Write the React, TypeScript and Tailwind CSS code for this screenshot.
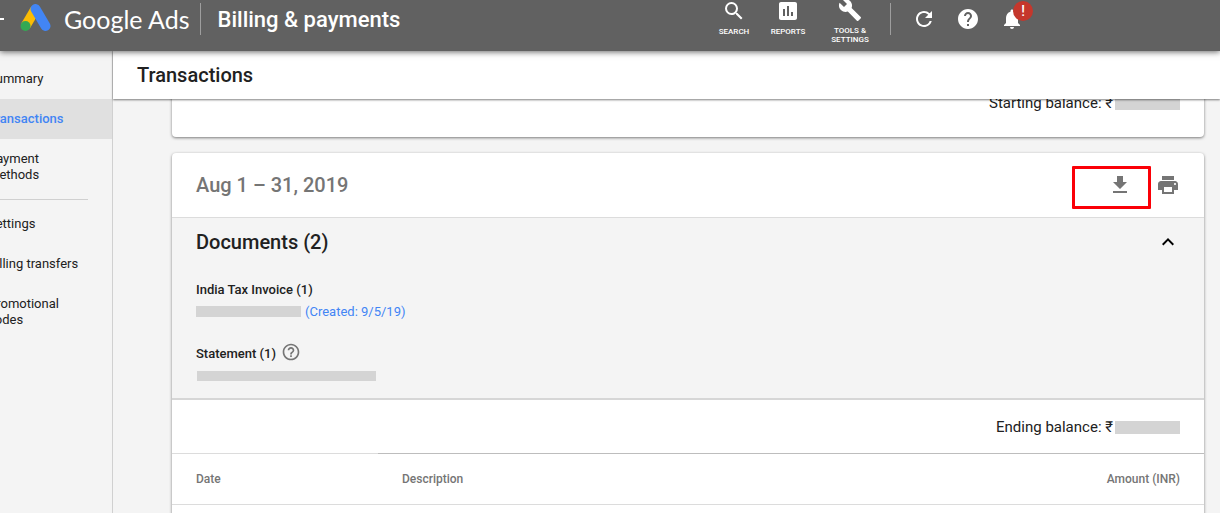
import type { ReactNode } from "react";
import {
  MdAssessment,
  MdBuild,
  MdExpandLess,
  MdFileDownload,
  MdHelp,
  MdHelpOutline,
  MdNotifications,
  MdPrint,
  MdRefresh,
  MdSearch,
} from "react-icons/md";

function AdsLogo() {
  return (
    <svg width="32" height="30" viewBox="0 0 32 30" className="shrink-0" aria-hidden="true">
      <path d="M15.5 5 5.5 22" stroke="#fbbc04" strokeWidth="10" />
      <circle cx="5.5" cy="22" r="5" fill="#34a853" />
      <path d="M15.5 5 25.5 22" stroke="#4285f4" strokeWidth="10" strokeLinecap="round" />
    </svg>
  );
}

interface ToolProps {
  icon: ReactNode;
  label: string;
  className: string;
}

function HeaderTool({ icon, label, className }: ToolProps) {
  return (
    <button
      type="button"
      className={
        "flex w-[54px] flex-col items-center text-[8px] font-medium uppercase leading-[9px] text-white " +
        className
      }
    >
      {icon}
      <span>{label}</span>
    </button>
  );
}

function Header() {
  return (
    <header className="relative z-20 flex h-[51px] shrink-0 items-start bg-[#616161] text-white shadow-[0_1px_6px_rgba(0,0,0,0.6)]">
      <div className="flex h-[38px] items-center">
        <span className="h-0.5 w-1 bg-white" />
        <a href="#home" className="ml-4 flex items-center gap-3">
          <AdsLogo />
          <span className="font-[Lato] text-[25px] leading-8">Google Ads</span>
        </a>
      </div>
      <div className="ml-2.5 flex pt-[3px]">
        <span className="h-8 w-px bg-[#9e9e9e]" />
        <h1 className="ml-[17px] pt-px text-[22px] font-medium leading-8">Billing &amp; payments</h1>
      </div>

      <div className="ml-auto flex">
        <HeaderTool className="-mt-px gap-1" icon={<MdSearch size={24} />} label="Search" />
        <HeaderTool className="-mt-px gap-1" icon={<MdAssessment size={24} />} label="Reports" />
        <HeaderTool
          className="-mt-0.5 ml-2 gap-1"
          icon={<MdBuild size={24} />}
          label="Tools & Settings"
        />
      </div>
      <div className="ml-[13px] mr-[196px] flex h-[38px] items-center">
        <span className="h-8 w-px bg-[#9e9e9e]" />
        <button type="button" aria-label="Refresh" className="ml-[21px]">
          <MdRefresh size={24} />
        </button>
        <button type="button" aria-label="Help" className="ml-5">
          <MdHelp size={24} />
        </button>
        <button type="button" aria-label="Notifications" className="relative ml-5">
          <MdNotifications size={24} />
          <span className="absolute -top-1.5 left-[13px] flex size-5 items-center justify-center rounded-full bg-[#c5372c] text-sm font-medium leading-5">
            !
          </span>
        </button>
      </div>
    </header>
  );
}

function NavItem({ label, active = false }: { label: string; active?: boolean }) {
  return (
    <a
      href="#nav"
      className={
        "block py-3 pr-6 text-[13px] leading-4 " +
        (active ? "bg-[#e0e0e0] font-medium text-[#4285f4]" : "text-[#212121]")
      }
    >
      <span className="-ml-3 block">{label}</span>
    </a>
  );
}

function Sidebar() {
  return (
    <nav className="w-[113px] shrink-0 overflow-hidden border-r border-[#d0d0d0] bg-[#f4f4f4] pt-2">
      <NavItem label="Summary" />
      <NavItem label="Transactions" active />
      <NavItem label="Payment methods" />
      <hr className="my-1 mr-6 border-[#d0d0d0]" />
      <NavItem label="Settings" />
      <NavItem label="Billing transfers" />
      <NavItem label="Promotional codes" />
    </nav>
  );
}

function Balance({ label }: { label: string }) {
  return (
    <div className="flex items-center justify-end text-[15px] leading-5 text-[#212121]">
      <span>{label}: ₹</span>
      <span className="ml-0.5 h-[13px] w-[65px] bg-[#d4d4d4]" />
    </div>
  );
}

const cardClasses = "rounded-sm bg-white shadow-[0_1px_3px_rgba(0,0,0,0.5)]";

function StatementCard() {
  return (
    <section className={cardClasses}>
      <div className="flex h-16 items-center px-6">
        <h3 className="text-xl font-medium leading-6 text-[#757575]">Aug 1 – 31, 2019</h3>
        <div className="ml-auto flex gap-6 text-[#757575]">
          <button type="button" aria-label="Download" className="relative">
            <MdFileDownload size={24} />
            <span className="absolute -left-9 -top-[7px] h-[43px] w-[79px] rounded-[1px] border-[3px] border-[#fb0007]" />
          </button>
          <button type="button" aria-label="Print">
            <MdPrint size={24} />
          </button>
        </div>
      </div>

      <div className="border-b-2 border-t border-b-[#d6d6d6] border-t-[#dcdcdc] bg-[#f4f4f4] px-6 pb-[17px] pt-3 text-[13px] text-[#212121]">
        <div className="flex items-center justify-between">
          <h3 className="text-xl font-medium leading-6">Documents (2)</h3>
          <button type="button" aria-label="Collapse documents" className="text-black">
            <MdExpandLess size={24} />
          </button>
        </div>
        <h4 className="mt-7 font-medium leading-4">India Tax Invoice (1)</h4>
        <div className="mt-1.5 flex items-start gap-1 leading-4">
          <span className="mt-0.5 h-[11px] w-[105px] bg-[#d4d4d4]" />
          <a href="#invoice" className="text-[#4285f4]">
            (Created: 9/5/19)
          </a>
        </div>
        <div className="mt-[22px] flex h-5 items-end gap-[5px]">
          <h4 className="font-medium leading-4">Statement (1)</h4>
          <button type="button" aria-label="About statements" className="text-[#757575]">
            <MdHelpOutline size={20} />
          </button>
        </div>
        <div className="ml-px mt-[9px] h-2.5 w-[179px] bg-[#d4d4d4]" />
      </div>

      <div className="px-6 pb-4 pt-[17px]">
        <Balance label="Ending balance" />
      </div>

      <table className="w-full text-left text-xs text-[#757575]">
        <thead>
          <tr className="h-[51px] border-b border-[#dcdcdc]">
            <th className="w-[206px] border-t border-[#dcdcdc] pl-6 font-medium">Date</th>
            <th className="border-t border-[#bdbdbd] pl-6 font-medium">Description</th>
            <th className="border-t border-[#bdbdbd] pr-6 text-right font-medium">Amount (INR)</th>
          </tr>
        </thead>
        <tbody>
          <tr className="h-12">
            <td colSpan={3} />
          </tr>
        </tbody>
      </table>
    </section>
  );
}

export default function App() {
  return (
    <div className="flex h-screen flex-col overflow-hidden bg-[#f4f4f4] font-[Roboto,sans-serif]">
      <Header />
      <div className="flex min-h-0 flex-1">
        <Sidebar />
        <main className="flex min-w-0 flex-1 flex-col">
          <div className="relative z-10 flex h-12 shrink-0 items-center bg-white pl-6 shadow-[0_1px_2px_rgba(0,0,0,0.5)]">
            <h2 className="text-xl font-medium leading-6 text-[#212121]">Transactions</h2>
          </div>
          <div className="min-h-0 flex-1 overflow-hidden pl-[59px] pr-4">
            <section className={cardClasses + " -mt-4 mb-4 px-6 pb-6 pt-2.5"}>
              <Balance label="Starting balance" />
            </section>
            <StatementCard />
          </div>
        </main>
      </div>
    </div>
  );
}
